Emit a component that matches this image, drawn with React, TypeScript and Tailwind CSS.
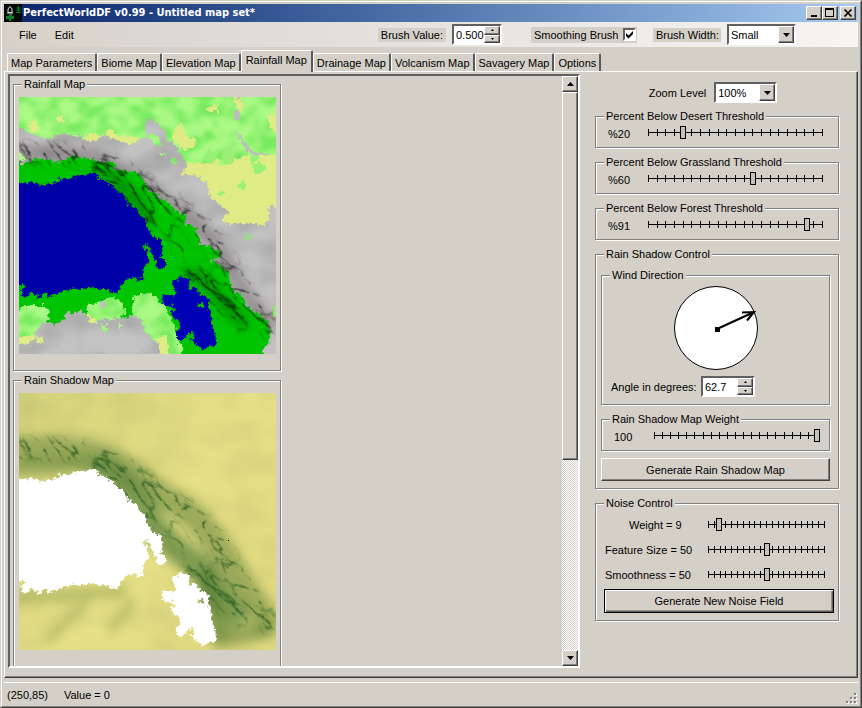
import React, { useState } from "react";

const raised =
  "border border-t-[#ffffff] border-l-[#ffffff] border-b-[#404040] border-r-[#404040] shadow-[inset_-1px_-1px_0_#808080] bg-[#d4d0c8]";
const sunken =
  "border-2 border-t-[#606060] border-l-[#606060] border-b-[#ffffff] border-r-[#ffffff] bg-white";

function Triangle({ up = false, small = false }: { up?: boolean; small?: boolean }) {
  const w = small ? 3 : 7;
  const h = small ? 2 : 4;
  const points = up
    ? `0,${h} ${w},${h} ${w / 2},0`
    : `0,0 ${w},0 ${w / 2},${h}`;
  return (
    <svg width={w} height={h} viewBox={`0 0 ${w} ${h}`} aria-hidden="true">
      <polygon points={points} fill="#000" />
    </svg>
  );
}

function Group({
  title,
  className = "",
  children,
}: {
  title: string;
  className?: string;
  children: React.ReactNode;
}) {
  return (
    <fieldset className="min-w-0 shrink-0 border border-[#808080] shadow-[1px_1px_0_#fff,inset_1px_1px_0_#fff]">
      <legend className="ml-2 bg-[#d4d0c8] px-0.5">{title}</legend>
      <div className={className}>{children}</div>
    </fieldset>
  );
}

function Slider({ id, value, onChange }: { id: string; value: number; onChange: (v: number) => void }) {
  return (
    <div className="grid h-[13px] min-w-0 flex-1 items-center">
      <div className="mx-[3px] grid grid-cols-1 [grid-area:1/1]">
        <div className="h-px self-center bg-black [grid-area:1/1]" />
        <div className="flex h-[7px] justify-between [grid-area:1/1]">
          {Array.from({ length: 21 }, (_, i) => (
            <span key={i} className="w-px bg-black" />
          ))}
        </div>
      </div>
      <input
        id={id}
        type="range"
        min={0}
        max={100}
        value={value}
        onChange={(e) => onChange(Number(e.target.value))}
        className="m-0 h-[13px] w-full min-w-0 appearance-none bg-transparent outline-none [grid-area:1/1] [&::-webkit-slider-thumb]:h-[13px] [&::-webkit-slider-thumb]:w-[6px] [&::-webkit-slider-thumb]:appearance-none [&::-webkit-slider-thumb]:border [&::-webkit-slider-thumb]:border-black [&::-webkit-slider-thumb]:bg-[#c4c1ba]"
      />
    </div>
  );
}

function Spinner({ id, initial, className }: { id: string; initial: string; className: string }) {
  const [value, setValue] = useState(initial);
  const digits = (initial.split(".")[1] || "").length;
  const step = Math.pow(10, -digits);
  const bump = (d: number) => setValue((Number(value) + d).toFixed(digits));
  return (
    <div className={`flex h-[21px] ${sunken} ${className}`}>
      <input
        id={id}
        value={value}
        onChange={(e) => setValue(e.target.value)}
        className="min-w-0 flex-1 bg-white pl-0.5 outline-none"
      />
      <div className="flex w-4 shrink-0 flex-col">
        <button aria-label="Increase" onClick={() => bump(step)} className={`flex flex-1 items-center justify-center ${raised}`}>
          <Triangle up small />
        </button>
        <button aria-label="Decrease" onClick={() => bump(-step)} className={`flex flex-1 items-center justify-center ${raised}`}>
          <Triangle small />
        </button>
      </div>
    </div>
  );
}

function Dropdown({ id, options, className }: { id: string; options: string[]; className: string }) {
  return (
    <div className={`grid h-[21px] ${sunken} ${className}`}>
      <select id={id} className="h-[17px] w-full appearance-none bg-white pl-0.5 outline-none [grid-area:1/1]">
        {options.map((o) => (
          <option key={o}>{o}</option>
        ))}
      </select>
      <span className={`pointer-events-none flex h-[17px] w-4 items-center justify-center justify-self-end [grid-area:1/1] ${raised}`}>
        <Triangle />
      </span>
    </div>
  );
}

const SEA =
  "M40 330L75 322 95 322 120 326 150 326 172 320 178 308 186 314 215 307 245 300 275 296 288 294 295 312 320 316 330 330 350 342 370 362 385 382 400 398 415 405 425 425 435 435 440 455 450 468 462 485 478 490 487 510 487 530 480 548 495 560 494 580 470 583 468 560 455 545 455 520 440 508 432 515 443 535 445 555 435 575 425 590 430 610 420 620 405 606 385 612 370 625 358 635 352 655 335 652 320 642 285 642 270 636 240 645 215 640 185 650 160 658 150 668 140 655 120 665 95 655 75 672 62 660 65 640 80 635 40 625Z";
const LAKE =
  "M520 618L535 612 548 602 565 612 570 630 562 642 585 638 597 650 592 662 615 660 627 672 625 695 630 715 635 745 645 765 648 800 635 815 612 825 590 815 577 795 578 775 565 775 560 785 545 797 528 790 530 770 545 755 535 738 520 730 512 715 525 705 520 690 495 695 486 690 488 660 505 655 520 665 528 650 520 635ZM592 685L610 690 612 698 594 695Z";
const FOREST =
  "M40 262L80 265 95 255 120 250 135 258 150 255 165 262 185 262 205 245 245 248 285 255 300 262 325 262 340 255 348 275 340 285 370 285 400 292 425 305 440 330 450 350 470 362 485 375 500 372 510 390 530 410 555 412 560 430 555 445 590 458 585 470 600 490 598 505 640 518 665 538 650 548 630 558 660 570 680 590 695 620 690 640 725 665 735 690 760 710 800 735 810 770 805 800 780 850 510 850 550 820 520 790 525 760 500 720 480 690 460 660 430 658 400 668 398 720 370 728 330 720 340 700 320 670 300 690 260 690 262 720 240 708 200 715 180 740 160 750 140 740 150 710 130 690 90 690 40 705Z";
const PLAINS =
  "M20 30H870V375L820 395 800 400 808 420 800 445 790 452 740 445 700 447 665 440 668 422 690 415 640 375 625 345 612 315 580 300 540 300 555 285 560 270 548 250 530 215 505 195 490 165 480 150 465 140 450 136 435 142 432 160 445 180 430 190 385 210 360 200 320 180 270 200 240 182 185 178 160 185 130 190 100 178 80 170 40 145ZM40 228L68 230 76 252 60 262 40 260ZM40 705L90 690 130 690 150 715 135 740 115 755 110 780 95 800 75 810 40 795ZM262 690L300 680 305 700 316 700 320 665 345 668 370 690 380 715 350 730 300 735 275 748 262 725ZM400 662L430 658 460 660 500 700 520 745 530 790 550 820 540 850 485 850 480 805 450 785 430 765 428 735 395 720ZM446 178L475 182 487 212 470 214 450 196ZM512 248L528 246 530 264 514 266ZM482 234L498 240 498 248 484 242ZM738 478L754 480 745 496 730 496ZM302 750L322 754 318 768 302 764ZM355 742L368 748 362 762 353 756ZM106 786L130 784 126 804 108 802ZM818 690L850 690 850 726 820 726Z";
const DRY =
  "M560 265L600 262 625 268 650 250 665 268 690 265 715 250 745 238 760 262 790 240 870 250 870 470 650 460 610 350 595 318 530 302ZM240 205L262 178 285 172 310 185 330 160 350 180 400 185 425 190 400 215ZM85 140L110 135 118 155 112 175 90 165ZM525 155L545 150 560 180 590 200 575 225 550 225 520 195ZM700 66L720 66 732 90 728 110 712 105ZM800 120L850 110 850 180 815 165ZM165 125L195 118 190 140 168 142ZM620 95L650 90 655 110 630 112ZM470 790L500 780 510 850 480 850ZM50 785L130 780 130 810 50 815ZM258 715L275 725 290 740 275 752 258 745Z";
const RIDGE =
  "M40 240C120 225 230 238 320 262C400 300 450 350 510 390C600 430 650 520 690 580C720 640 760 690 815 770";
const FOOT =
  "M290 280C370 320 420 380 450 450M560 590C640 620 660 690 740 750";

const region = { filterUnits: "userSpaceOnUse" as const, x: -100, y: -100, width: 1100, height: 1100, colorInterpolationFilters: "sRGB" };

function MapFilters({ id, vein }: { id: string; vein: string }) {
  return (
    <defs>
      <filter id={`${id}-jag`} {...region}>
        <feTurbulence type="fractalNoise" baseFrequency="0.08" numOctaves="3" seed="4" />
        <feDisplacementMap in="SourceGraphic" scale="24" xChannelSelector="R" yChannelSelector="G" />
      </filter>
      <filter id={`${id}-veins`} {...region}>
        <feTurbulence type="turbulence" baseFrequency="0.014 0.032" numOctaves="4" seed="11" />
        <feColorMatrix values={`${vein}  -5 0 0 0 1.350`} />
        <feGaussianBlur stdDeviation="1.500" result="v" />
        <feGaussianBlur in="SourceGraphic" stdDeviation="14" result="m" />
        <feComposite in="v" in2="m" operator="in" />
      </filter>
      <filter id={`${id}-soft`} {...region}>
        <feGaussianBlur stdDeviation="16" />
      </filter>
      <filter id={`${id}-mottle`} {...region}>
        <feTurbulence type="fractalNoise" baseFrequency="0.017 0.022" numOctaves="2" seed="7" />
        <feColorMatrix values="0 0 0 0 0.4  0 0 0 0 0.9  0 0 0 0 0.32  3.500 0 0 0 -1.400" />
        <feGaussianBlur stdDeviation="4" />
        <feComposite in2="SourceGraphic" operator="in" />
      </filter>
      <filter id={`${id}-shade`} {...region}>
        <feTurbulence type="fractalNoise" baseFrequency="0.009 0.013" numOctaves="2" seed="3" />
        <feColorMatrix values="0 0 0 0 0.2  0 0 0 0 0.2  0 0 0 0 0.2  1.200 0 0 0 -0.450" />
        <feComposite in2="SourceGraphic" operator="in" />
      </filter>
    </defs>
  );
}

function Ridges({ id }: { id: string }) {
  return (
    <g transform="rotate(42 442 451)" filter={`url(#${id}-veins)`}>
      <g transform="rotate(-42 442 451)" fill="none" stroke="#000">
        <path d={RIDGE} strokeWidth="52" />
        <path d={FOOT} strokeWidth="56" />
        <path d="M480 420L560 540" strokeWidth="30" />
      </g>
    </g>
  );
}

function RainfallMap() {
  return (
    <svg role="img" aria-label="Rainfall map" width="257" height="257" viewBox="57 66 771 771" className="block">
      <MapFilters id="rf" vein="0 0 0 0 0.050  0 0 0 0 0.050  0 0 0 0 0.050" />
      <rect x="57" y="66" width="771" height="771" fill="#c3c2c3" />
      <rect x="57" y="66" width="771" height="771" filter="url(#rf-shade)" opacity="0.35" />
      <path d={RIDGE} fill="none" stroke="#6b6166" strokeWidth="48" opacity="0.5" filter="url(#rf-soft)" />
      <path d={FOREST} fill="#00c400" filter="url(#rf-jag)" />
      <clipPath id="rf-box">
        <rect x="57" y="66" width="771" height="771" />
      </clipPath>
      <mask id="rf-plains" maskUnits="userSpaceOnUse" x="57" y="66" width="771" height="771">
        <path d={PLAINS} fill="#fff" filter="url(#rf-jag)" />
      </mask>
      <g mask="url(#rf-plains)">
        <rect x="57" y="66" width="771" height="771" fill="#abf985" />
        <rect x="57" y="66" width="771" height="771" filter="url(#rf-mottle)" opacity="0.75" />
        <path d={DRY} fill="#dfeb85" filter="url(#rf-jag)" />
        <g fill="#9af076" filter="url(#rf-jag)">
          <ellipse cx="632" cy="244" rx="20" ry="20" />
          <ellipse cx="688" cy="240" rx="20" ry="24" />
          <ellipse cx="775" cy="278" rx="18" ry="18" />
          <ellipse cx="726" cy="332" rx="12" ry="10" />
          <ellipse cx="662" cy="355" rx="9" ry="7" />
        </g>
      </g>
      <g fill="none" stroke="#bdbdbd" filter="url(#rf-jag)">
        <path d="M706 66L725 82" strokeWidth="5" />
        <path d="M711 108L711 136" strokeWidth="14" />
        <path d="M706 170L728 195 740 220 765 238 806 240" strokeWidth="9" />
      </g>
      <path d={FOOT} fill="none" stroke="#004c00" strokeWidth="26" opacity="0.6" filter="url(#rf-soft)" clipPath="url(#rf-box)" />
      <g opacity="0.75">
        <Ridges id="rf" />
      </g>
      <g filter="url(#rf-jag)" fill="#0000a8" fillRule="evenodd">
        <path d={SEA} />
        <path d={LAKE} fill="#0000b4" />
      </g>
    </svg>
  );
}

function RainShadowMap() {
  return (
    <svg role="img" aria-label="Rain shadow map" width="257" height="257" viewBox="57 66 771 771" className="block">
      <MapFilters id="rs" vein="0 0 0 0 0.140  0 0 0 0 0.350  0 0 0 0 0.120" />
      <linearGradient id="rs-base" x1="0" y1="0" x2="1" y2="0.7">
        <stop offset="0" stopColor="#d3d27a" />
        <stop offset="0.6" stopColor="#e5df86" />
        <stop offset="1" stopColor="#e0da80" />
      </linearGradient>
      <rect x="57" y="66" width="771" height="771" fill="url(#rs-base)" />
      <rect x="57" y="66" width="771" height="771" filter="url(#rs-shade)" opacity="0.1" />
      <g fill="none" filter="url(#rs-soft)">
        <path d={RIDGE} stroke="#8a9e50" strokeWidth="80" opacity="0.8" />
        <path d="M290 280C370 320 420 380 450 450C500 510 520 530 600 590C640 640 660 690 730 750" stroke="#55803a" strokeWidth="76" opacity="0.7" />
        <path d="M40 290L300 275" stroke="#6d8c42" strokeWidth="50" opacity="0.6" />
        <path d="M610 600L660 800" stroke="#4b7430" strokeWidth="60" opacity="0.6" />
        <path d="M40 680L380 660" stroke="#8d9e4c" strokeWidth="36" opacity="0.5" />
        <path d="M640 810L828 770" stroke="#66863c" strokeWidth="50" opacity="0.6" />
        <path d="M140 810L260 690M330 780L400 690" stroke="#8d9e4c" strokeWidth="20" opacity="0.6" />
      </g>
      <g opacity="0.85">
        <Ridges id="rs" />
      </g>
      <g filter="url(#rs-jag)" fill="#fff" fillRule="evenodd">
        <path d={SEA} />
        <path d={LAKE} />
      </g>
      <rect x="684" y="507" width="3" height="3" fill="#000" />
    </svg>
  );
}

const tabs = [
  "Map Parameters",
  "Biome Map",
  "Elevation Map",
  "Rainfall Map",
  "Drainage Map",
  "Volcanism Map",
  "Savagery Map",
  "Options",
];

function TitleBar() {
  const box = `flex h-[14px] w-4 items-center justify-center ${raised}`;
  return (
    <header className="flex h-[18px] shrink-0 items-center bg-linear-to-r from-[#0a246a] to-[#a6caf0] pr-0.5">
      <svg width="18" height="18" viewBox="0 0 18 18" aria-hidden="true">
        <rect width="18" height="18" fill="#020a08" />
        <path d="M4 8.500V5L6 2.500 8 5v3.500zM3 9h6" fill="none" stroke="#ddd" strokeWidth="1" />
        <path d="M14.500 2v7M12.500 4h4M12 6h5M12 8.500h5" stroke="#137a2a" strokeWidth="1" />
        <path d="M5 10h3v2h2v3H7v2H5v-2H2v-3h3z" fill="#11802c" />
      </svg>
      <h1 className="ml-px flex-1 font-['DejaVu_Sans_Condensed','Noto_Sans',sans-serif] text-[11px] font-bold text-white">
        PerfectWorldDF v0.99 - Untitled map set*
      </h1>
      <button aria-label="Minimize" className={box}>
        <svg width="12" height="10" viewBox="0 0 12 10"><path d="M3 7h6v2H3z" /></svg>
      </button>
      <button aria-label="Maximize" className={box}>
        <svg width="12" height="10" viewBox="0 0 12 10"><path d="M1 0h9v9H1zM2 2v6h7V2z" fillRule="evenodd" /></svg>
      </button>
      <button aria-label="Close" className={`ml-0.5 ${box}`}>
        <svg width="12" height="10" viewBox="0 0 12 10"><path d="M2.500 1.500l7 7M9.500 1.500l-7 7" stroke="#000" strokeWidth="1.700" /></svg>
      </button>
    </header>
  );
}

function Toolbar() {
  const [smooth, setSmooth] = useState(true);
  return (
    <div className="flex h-[25px] shrink-0 items-center bg-linear-to-r from-[#d6d2ca] to-[#f6f5f3] pr-[62px]">
      <button className="ml-[15px]">File</button>
      <button className="ml-[18px]">Edit</button>
      <label htmlFor="brush-value" className="ml-auto bg-[#d4d0c8] px-[3px]">Brush Value:</label>
      <Spinner id="brush-value" initial="0.500" className="ml-1.5 w-[50px]" />
      <label className="ml-[29px] flex h-4 w-[106px] items-center justify-between bg-[#d4d0c8] pr-px pl-[3px]">
        Smoothing Brush
        <span className={`grid size-[13px] place-items-center ${sunken}`}>
          <input type="checkbox" checked={smooth} onChange={() => setSmooth(!smooth)} className="size-[9px] appearance-none [grid-area:1/1]" />
          {smooth && (
            <svg width="9" height="9" viewBox="0 0 9 9" className="pointer-events-none [grid-area:1/1]">
              <path d="M1 3l2.500 2.500L8 1v3L3.500 8.500 1 6z" />
            </svg>
          )}
        </span>
      </label>
      <label htmlFor="brush-width" className="ml-4 w-[68px] bg-[#d4d0c8] pl-[3px]">Brush Width:</label>
      <Dropdown id="brush-width" options={["Small", "Medium", "Large"]} className="ml-1.5 w-[69px]" />
    </div>
  );
}

function Tabs({ active, onSelect }: { active: string; onSelect: (t: string) => void }) {
  return (
    <div role="tablist" className="flex h-6 shrink-0 items-end pl-[3px]">
      {tabs.map((t) => (
        <button
          key={t}
          role="tab"
          aria-selected={t === active}
          onClick={() => onSelect(t)}
          className={`rounded-t-[2px] border-t border-r-2 border-l border-t-white border-r-[#5a5a5a] border-l-white whitespace-nowrap ${
            t === active ? "z-10 -mb-px h-[22px] bg-[#d4d0c8] px-1 pb-1" : "h-[18px] px-[3px]"
          }`}
        >
          {t}
        </button>
      ))}
    </div>
  );
}

function MapArea() {
  return (
    <div className="flex min-h-0 min-w-0 flex-1 border-2 border-t-[#606060] border-r-[#ffffff] border-b-[#ffffff] border-l-[#606060]">
      <div className="flex min-w-0 flex-1 flex-col items-start gap-0.5 overflow-hidden pt-px pl-[3px]">
        <Group title="Rainfall Map" className="pt-1.5 pr-1 pb-4 pl-[5px]">
          <RainfallMap />
        </Group>
        <Group title="Rain Shadow Map" className="pt-1.5 pr-1 pb-4 pl-[5px]">
          <RainShadowMap />
        </Group>
      </div>
      <div className="flex w-4 shrink-0 flex-col bg-[conic-gradient(#fff_25%,#d4d0c8_0_50%,#fff_0_75%,#d4d0c8_0)] bg-[length:2px_2px]">
        <button aria-label="Scroll up" className={`flex h-4 shrink-0 items-center justify-center ${raised}`}>
          <Triangle up />
        </button>
        <div className="min-h-0 flex-1">
          <div className={`h-[66%] ${raised}`} />
        </div>
        <button aria-label="Scroll down" className={`flex h-4 shrink-0 items-center justify-center ${raised}`}>
          <Triangle />
        </button>
      </div>
    </div>
  );
}

function Threshold({ id, title, initial }: { id: string; title: string; initial: number }) {
  const [v, setV] = useState(initial);
  return (
    <Group title={title} className="px-3 pb-1.5">
      <div className="flex h-[18px]">
        <label htmlFor={id} className="w-[37px] pt-1">%{v}</label>
        <div className="flex flex-1 pt-[3px]">
          <Slider id={id} value={v} onChange={setV} />
        </div>
      </div>
    </Group>
  );
}

function NoiseRow({ id, name, initial, indent = "" }: { id: string; name: string; initial: number; indent?: string }) {
  const [v, setV] = useState(initial);
  return (
    <div className="flex h-[25px] items-center pr-[10px] pl-[9px]">
      <label htmlFor={id} className={`w-[100px] shrink-0 whitespace-nowrap ${indent}`}>{name} = {v}</label>
      <Slider id={id} value={v} onChange={setV} />
    </div>
  );
}

function Controls() {
  const [weight, setWeight] = useState(100);
  return (
    <aside className="flex w-[244px] shrink-0 flex-col gap-[7px] pt-2">
      <div className="-mb-px flex items-center self-center pr-2">
        <label htmlFor="zoom" className="mr-2">Zoom Level</label>
        <Dropdown id="zoom" options={["100%", "200%", "400%"]} className="w-[63px]" />
      </div>
      <Threshold id="desert" title="Percent Below Desert Threshold" initial={20} />
      <Threshold id="grassland" title="Percent Below Grassland Threshold" initial={60} />
      <Threshold id="forest" title="Percent Below Forest Threshold" initial={91} />
      <Group title="Rain Shadow Control" className="flex flex-col gap-[7px] pt-[7px] pr-2 pb-[7px] pl-[5px]">
        <Group title="Wind Direction" className="px-[9px] pt-1 pb-[7px]">
          <svg role="img" aria-label="Wind direction dial" width="84" height="84" viewBox="0 0 84 84" className="mx-auto block">
            <circle cx="42" cy="42" r="41.500" fill="#fff" stroke="#000" />
            <path d="M43 43L78 27M68 26.500L80 26 73 34.500" fill="none" stroke="#000" strokeWidth="2" />
            <rect x="41" y="41" width="5" height="5" />
          </svg>
          <div className="mt-1.5 flex items-center">
            <label htmlFor="angle" className="w-[90px]">Angle in degrees:</label>
            <Spinner id="angle" initial="62.7" className="w-[54px]" />
          </div>
        </Group>
        <Group title="Rain Shadow Map Weight" className="px-[9px] pb-1.5">
          <div className="flex h-[18px]">
            <label htmlFor="shadow-weight" className="w-10 pt-1 pl-[3px]">{weight}</label>
            <div className="flex flex-1 pt-[3px]">
              <Slider id="shadow-weight" value={weight} onChange={setWeight} />
            </div>
          </div>
        </Group>
        <button className={`h-[23px] ${raised}`}>Generate Rain Shadow Map</button>
      </Group>
      <Group title="Noise Control" className="pt-0.5 pb-[7px]">
        <NoiseRow id="noise-weight" name="Weight" initial={9} indent="pl-6" />
        <NoiseRow id="feature-size" name="Feature Size" initial={50} />
        <NoiseRow id="smoothness" name="Smoothness" initial={50} />
        <div className="flex pt-0.5 pr-1 pl-2">
          <button className="h-6 flex-1 border border-black bg-[#d4d0c8] shadow-[inset_1px_1px_0_#fff,inset_-1px_-1px_0_#606060,inset_-2px_-2px_0_#909090]">
            Generate New Noise Field
          </button>
        </div>
      </Group>
    </aside>
  );
}

export default function App() {
  const [active, setActive] = useState("Rainfall Map");
  return (
    <div className="flex h-screen min-h-[640px] flex-col border border-t-[#d4d0c8] border-r-[#404040] border-b-[#404040] border-l-[#d4d0c8] bg-[#d4d0c8] font-['Liberation_Sans',Arial,sans-serif] text-[11px] leading-[14px] text-black">
      <div className="flex min-h-0 flex-1 flex-col border border-t-white border-r-[#808080] border-b-[#808080] border-l-white px-0.5 pt-0.5">
        <TitleBar />
        <Toolbar />
        <Tabs active={active} onSelect={setActive} />
        <main className="flex min-h-0 flex-1 gap-[15px] border border-t-white border-r-[#404040] border-b-[#404040] border-l-white pt-0.5 pr-[18px] pb-[9px] pl-[3px] shadow-[inset_-1px_-1px_0_#808080]">
          <MapArea />
          <Controls />
        </main>
        <footer className="mt-1 flex h-6 shrink-0 items-center border-t border-white pl-[3px]">
          <span>(250,85)</span>
          <span className="ml-4">Value = 0</span>
          <svg width="12" height="12" viewBox="0 0 12 12" className="mt-2 ml-auto" aria-hidden="true">
            {[[8, 0], [4, 4], [8, 4], [0, 8], [4, 8], [8, 8]].map(([x, y]) => (
              <g key={`${x}-${y}`}>
                <rect x={x + 1} y={y + 1} width="2" height="2" fill="#fff" />
                <rect x={x} y={y} width="2" height="2" fill="#808080" />
              </g>
            ))}
          </svg>
        </footer>
      </div>
    </div>
  );
}
